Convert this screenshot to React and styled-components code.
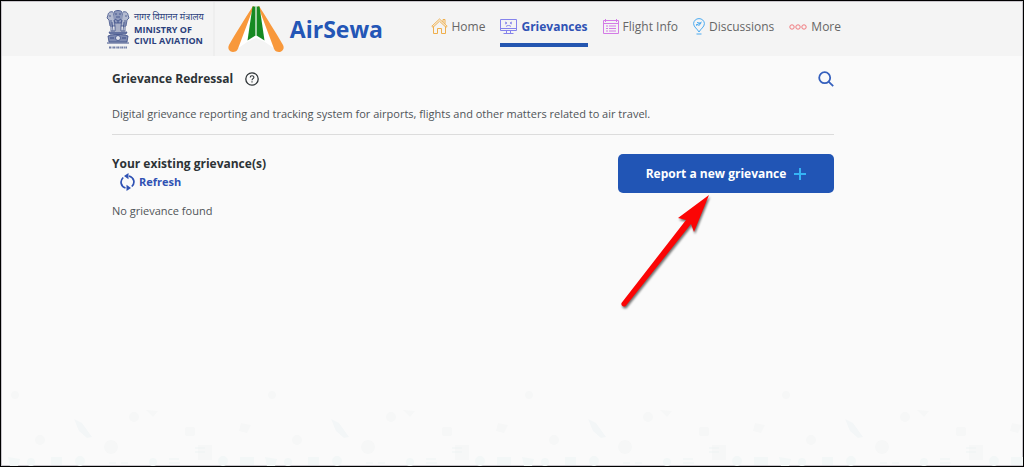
import React from "react";
import styled, { createGlobalStyle } from "styled-components";

const GlobalStyle = createGlobalStyle`
  * {
    box-sizing: border-box;
  }
  body {
    margin: 0;
    font-family: "Open Sans", "Noto Sans", sans-serif;
    color: #4f5458;
    background-color: #fafafa;
  }
`;

const Page = styled.div`
  display: flex;
  flex-direction: column;
  min-height: 100vh;
  border: 1px solid #000000;
  box-shadow: inset 0 0 0 1px #c9c6cc;
`;

const Header = styled.header`
  display: flex;
  justify-content: space-between;
  min-height: 54px;
  margin: 1px 1px 0;
  padding: 0 181px 0 104px;
  background-color: #f4f4f4;
`;

const Brand = styled.div`
  display: flex;
  align-items: stretch;
`;

const Ministry = styled.a`
  display: flex;
  align-items: center;
  gap: 4px;
  padding-right: 9px;
  border-right: 2px solid #eeeeee;
  color: #2b3f7c;
  font-size: 9px;
  font-weight: 700;
  line-height: 11px;
  text-decoration: none;
  white-space: nowrap;
`;

const MinistryText = styled.span`
  display: flex;
  flex-direction: column;
  padding-bottom: 2px;
`;

const Hindi = styled.span`
  font-weight: 400;
  line-height: 14px;
`;

const AppLink = styled.a`
  display: flex;
  align-items: center;
  gap: 6px;
  padding-left: 12px;
  color: #2456b6;
  font-size: 23px;
  font-weight: 700;
  line-height: 32px;
  text-decoration: none;
`;

const Nav = styled.nav`
  display: flex;
  align-items: flex-start;
  gap: 15px;
  padding-top: 12px;
`;

const NavLink = styled.a`
  display: flex;
  align-items: center;
  gap: 4px;
  height: 33px;
  padding-bottom: 4px;
  border-bottom: 4px solid ${({ $active }) => ($active ? "#2456b0" : "transparent")};
  color: ${({ $active }) => ($active ? "#2f52b4" : "#666666")};
  font-size: 12px;
  font-weight: ${({ $active }) => ($active ? 700 : 400)};
  line-height: 16px;
  text-decoration: none;
  white-space: nowrap;
`;

const Main = styled.main`
  flex: 1;
  padding: 13px 189px 24px 111px;
  font-size: 11px;
  line-height: 16px;
`;

const Intro = styled.section`
  padding-bottom: 12px;
  border-bottom: 1px solid #dcdcdc;
`;

const TitleRow = styled.div`
  display: flex;
  align-items: center;
  justify-content: space-between;
  margin-bottom: 17px;
`;

const TitleGroup = styled.div`
  display: flex;
  align-items: center;
  gap: 12px;
`;

const Title = styled.h1`
  margin: 0;
  color: #2d3336;
  font-size: 12px;
  font-weight: 700;
  line-height: 20px;
`;

const Text = styled.p`
  margin: 0;
`;

const IconButton = styled.button`
  display: flex;
  padding: 0;
  border: 0;
  background: none;
  color: ${({ $color }) => $color};
  cursor: pointer;
`;

const Grievances = styled.section`
  display: flex;
  align-items: flex-start;
  justify-content: space-between;
  padding-top: 19px;
`;

const List = styled.div`
  display: flex;
  flex-direction: column;
  align-items: flex-start;
`;

const RefreshButton = styled.button`
  display: flex;
  align-items: center;
  gap: 4px;
  height: 16px;
  margin: 0 0 13px 8px;
  padding: 0;
  border: 0;
  background: none;
  color: #2f52b4;
  font-family: inherit;
  font-size: 11px;
  font-weight: 700;
  line-height: 16px;
  cursor: pointer;
`;

const ReportArea = styled.div`
  position: relative;
`;

const ReportButton = styled.button`
  display: flex;
  align-items: center;
  justify-content: center;
  gap: 8px;
  width: 216px;
  height: 39px;
  border: 0;
  border-radius: 5px;
  background-color: #2155b5;
  color: #ffffff;
  font-family: inherit;
  font-size: 12px;
  font-weight: 700;
  cursor: pointer;
`;

const Arrow = styled.svg`
  position: absolute;
  top: 100%;
  left: 0;
  filter: drop-shadow(1px 2px 1px rgba(0, 0, 0, 0.55));
  pointer-events: none;
`;

const Backdrop = styled.svg`
  display: block;
  width: 100%;
  height: 80px;
`;

const EmblemIcon = () => (
  <svg width="24" height="41" viewBox="0 0 24 41" fill="none" stroke="#3b4d86">
    <path d="M8 3c1-2 7-2 8 0l1 5-2 6H9L7 8z" fill="#8e99bb" strokeWidth=".8" />
    <path d="M7 3C4 2 2 4 2 6L1 9l2 2 1 6h5l-1-6M17 3c3-1 5 1 5 3l1 3-2 2-1 6h-5l1-6" fill="#b4bbd0" strokeWidth=".8" />
    <path d="M9 5h2m2 0h2M10 8h4M9 10l3 2 3-2M10 14v8m4-8v8M6 13l1 9m11-9-1 9M3 7h2m14 0h2M12 12v10M5 11v5m14-5v5" strokeWidth=".8" />
    <path d="M5 17v5h4v-5m6 0v5h4v-5" strokeWidth=".8" />
    <path d="M3 23h18l-1 2H4zM2 27c5-2 15-2 20 0l-1 6H3z" fill="#7f8bb2" strokeWidth=".8" />
    <circle cx="12" cy="29" r="2.5" fill="#dfe2ec" strokeWidth=".8" />
    <path d="M4 29h4m8 0h4M1 34h22" strokeWidth="1.2" />
    <path d="M3 38.5h18" strokeWidth="2" strokeDasharray="2 .6 1 .5" opacity=".7" />
  </svg>
);

const AirSewaLogo = () => (
  <svg width="57" height="48" viewBox="-1 0 57 48">
    <path d="M26 1 9 44l10-7 9-4 9 4 10 7L30 1z" fill="#fff" />
    <path d="M25 1C18 12 9 26 1 40c-2 4 1 7 4 7 4 0 5-3 6-6L26 1z" fill="#f8983b" />
    <path d="M31 1c7 11 16 25 24 39 2 4-1 7-4 7-4 0-5-3-6-6L30 1z" fill="#f8983b" />
    <path d="M24.500 1.500h3V30.500L19.500 35.500z" fill="#168a22" />
    <path d="M31.500 1.500h-3V30.500L36.500 35.500z" fill="#168a22" />
    <path d="M28 1v30" stroke="#b5dab7" strokeWidth="1" />
  </svg>
);

const HomeIcon = () => (
  <svg width="17" height="17" viewBox="0 0 17 17" fill="none" stroke="#efaf4c" strokeWidth="1">
    <path d="M2.500 8.500v7h4v-5h4v5h4v-7M.8 8.300 8.500 1l7.700 7.300-1.200 1-6.500-6.100L2 9.300zM12 4V1.500h2v4.300" />
  </svg>
);

const MonitorIcon = () => (
  <svg width="17" height="16" viewBox="0 0 17 16" fill="none" stroke="#8583ec" strokeWidth="1">
    <path d="M.5.5h16v11H.5zM.5 9.500h16M6.500 11.500v2.500m4-2.500v2.500M3.500 14.500h10" />
    <path d="m5 3 2 1-2 1M12 3l-2 1 2 1M6 7.500c1-1.300 4-1.300 5 0" />
  </svg>
);

const FlightInfoIcon = () => (
  <svg width="16" height="15" viewBox="0 0 16 15" fill="none" stroke="#d47be6" strokeWidth="1">
    <path d="M.5 1.500h15v13H.5zM.5 4.500h15M2.500 0v3M13.500 0v3M3 7h2m1 0h7M3 9.500h2m1 0h7M3 12h2m1 0h7" />
  </svg>
);

const DiscussionIcon = () => (
  <svg width="12" height="17" viewBox="0 0 12 17" fill="none" stroke="#4baaf0" strokeWidth="1">
    <path d="M6 14C4.500 11 .6 9 .6 5.700a5.400 5.100 0 0 1 10.800 0C11.400 9 7.500 11 6 14zM3.500 16h5" />
    <path d="M3 7.500 8.700 4M4 4.500l3.500.8M5.500 8 8 5M3.300 6l1 1.200" />
  </svg>
);

const MoreIcon = () => (
  <svg width="18" height="6" viewBox="0 0 18 6" fill="none" stroke="#f0797e" strokeWidth="1">
    <circle cx="3" cy="3" r="2.200" />
    <circle cx="9" cy="3" r="2.200" />
    <circle cx="15" cy="3" r="2.200" />
  </svg>
);

const HelpIcon = () => (
  <svg width="14" height="14" viewBox="0 0 14 14" fill="none" stroke="currentColor">
    <circle cx="7" cy="7" r="6.200" strokeWidth="1.300" />
    <path d="M5.200 5.500C5.200 3.200 8.900 3.300 8.900 5.300 8.900 6.700 7 6.700 7 8.300M7 9.300v1.300" strokeWidth="1.100" />
  </svg>
);

const SearchIcon = () => (
  <svg width="16" height="16" viewBox="0 0 16 16" fill="none" stroke="currentColor" strokeWidth="1.800">
    <circle cx="6.700" cy="6.700" r="5.500" />
    <path d="m10.600 10.600 4.600 4.500" />
  </svg>
);

const RefreshIcon = () => (
  <svg width="15" height="18" viewBox="0 0 15 18" fill="none" stroke="currentColor" strokeWidth="1.700">
    <path d="M3.200 4.500C-.5 8 .8 13.500 5.500 15M11.800 13.500C15.500 10 14.200 4.500 9 3" />
    <path d="M8.500 0 4 3l4.500 3.200zM6.500 11.800l4.500 3.200-4.500 3z" fill="currentColor" stroke="none" />
  </svg>
);

const PlusIcon = () => (
  <svg width="12" height="12" viewBox="0 0 12 12" stroke="#35b4f5" strokeWidth="2">
    <path d="M6 0v12M0 6h12" />
  </svg>
);

const navItems = [
  { label: "Home", icon: <HomeIcon /> },
  { label: "Grievances", icon: <MonitorIcon />, active: true },
  { label: "Flight Info", icon: <FlightInfoIcon /> },
  { label: "Discussions", icon: <DiscussionIcon /> },
  { label: "More", icon: <MoreIcon /> },
];

const TravelPattern = () => (
  <Backdrop aria-hidden="true">
    <defs>
      <pattern id="travel" width="257" height="80" patternUnits="userSpaceOnUse">
        <g fill="#f6f7f7">
          <circle cx="14" cy="9" r="4" />
          <circle cx="133" cy="31" r="5" />
          <path d="m145 24 12 1-5 6z" />
          <circle cx="39" cy="54" r="5" />
          <circle cx="110" cy="61" r="7" />
          <path d="m73 33 8 4 10 14-5 1-8-7z" fill="#f3f6f7" />
          <rect x="184" y="41" width="10" height="9" rx="2" />
          <path d="m240 37 10 2-4 8-8-2z" />
          <path d="M197 59h14v15h-14z" />
        </g>
        <g fill="#f3f7f7">
          <path d="M7 71l12 2-2 7H9zM50 71h11v8H50zM239 71h14v8h-14z" />
          <circle cx="30" cy="76" r="4" />
          <circle cx="79" cy="75" r="5" />
          <circle cx="152" cy="76" r="4" />
          <circle cx="222" cy="75" r="5" />
        </g>
        <path d="M168 73h10m-10 4h11m15-15h10m-10 4h10m-96 11h7m5 0h7" stroke="#eef4f4" />
      </pattern>
    </defs>
    <rect width="100%" height="80" fill="url(#travel)" />
  </Backdrop>
);

const App = () => {
  return (
    <>
      <GlobalStyle />
      <Page>
        <Header>
          <Brand>
            <Ministry href="#ministry">
              <EmblemIcon />
              <MinistryText>
                <Hindi lang="hi">नागर विमानन मंत्रालय</Hindi>
                <span>MINISTRY OF</span>
                <span>CIVIL AVIATION</span>
              </MinistryText>
            </Ministry>
            <AppLink href="#airsewa">
              <AirSewaLogo />
              AirSewa
            </AppLink>
          </Brand>
          <Nav>
            {navItems.map(({ label, icon, active }) => (
              <NavLink key={label} href={`#${label}`} $active={active}>
                {icon}
                {label}
              </NavLink>
            ))}
          </Nav>
        </Header>
        <Main>
          <Intro>
            <TitleRow>
              <TitleGroup>
                <Title>Grievance Redressal</Title>
                <IconButton aria-label="Help" $color="#2d3336">
                  <HelpIcon />
                </IconButton>
              </TitleGroup>
              <IconButton aria-label="Search" $color="#3560bd">
                <SearchIcon />
              </IconButton>
            </TitleRow>
            <Text>
              Digital grievance reporting and tracking system for airports, flights and other matters
              related to air travel.
            </Text>
          </Intro>
          <Grievances>
            <List>
              <Title as="h2">Your existing grievance(s)</Title>
              <RefreshButton>
                <RefreshIcon />
                Refresh
              </RefreshButton>
              <Text>No grievance found</Text>
            </List>
            <ReportArea>
              <ReportButton>
                Report a new grievance
                <PlusIcon />
              </ReportButton>
              <Arrow width="100" height="120" viewBox="0 0 100 120" aria-hidden="true">
                <path d="M91 2 60 25l8 2L3.500 110c-1 3 3 5 5 2L73 31l3 8z" fill="#fb0505" />
              </Arrow>
            </ReportArea>
          </Grievances>
        </Main>
        <TravelPattern />
      </Page>
    </>
  );
};

export default App;
